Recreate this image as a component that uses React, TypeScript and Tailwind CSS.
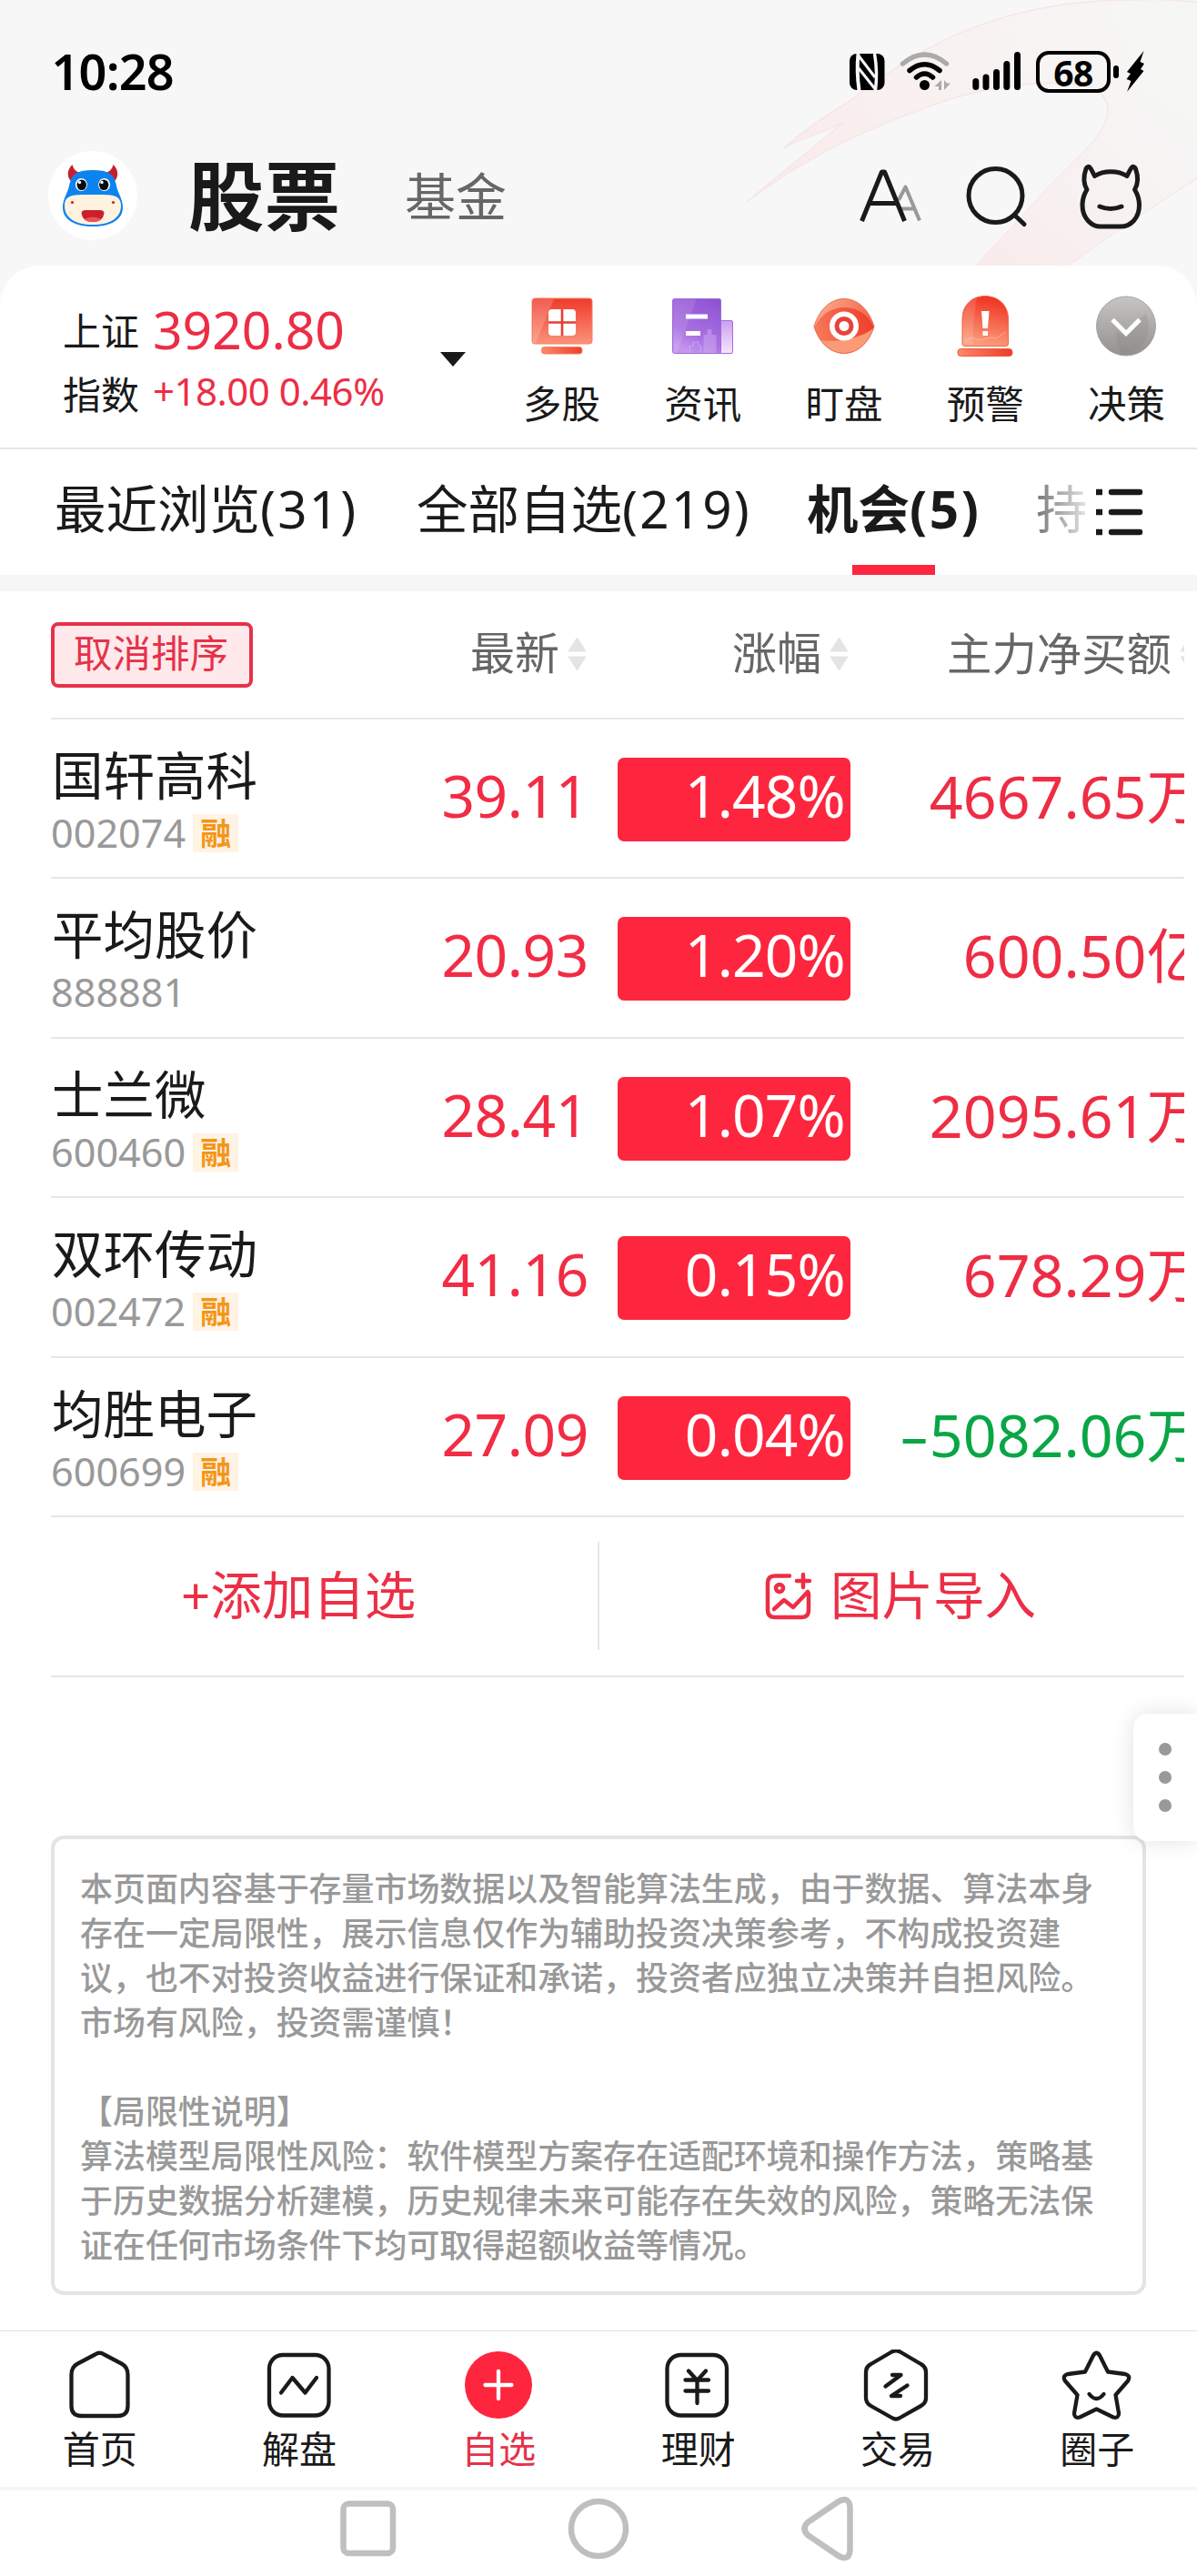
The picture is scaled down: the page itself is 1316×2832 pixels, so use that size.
import React from "react";

const FONT = "font-['Noto_Sans','Noto_Sans_CJK_SC',sans-serif]";

function Swoosh() {
  return (
    <svg className="absolute top-0 right-0" width="516" height="292" viewBox="800 0 516 292" fill="none">
      <defs>
        <linearGradient id="swoosh" x1="820" y1="223" x2="1250" y2="40" gradientUnits="userSpaceOnUse">
          <stop offset="0" stopColor="#fbe9ea" />
          <stop offset="0.5" stopColor="#f8f1f0" />
          <stop offset="1" stopColor="#f6f6f5" />
        </linearGradient>
        <linearGradient id="swooshTail" x1="1260" y1="60" x2="1120" y2="290" gradientUnits="userSpaceOnUse">
          <stop offset="0" stopColor="#f6f5f5" stopOpacity="0" />
          <stop offset="1" stopColor="#f9eced" />
        </linearGradient>
      </defs>
      <path
        d="M819.600 223 L926.600 135 C905 146 880 152 861.500 163 Q890 138 931 113 C975 84 1060 0 1245 0 Q1285 -2 1317 3 V195 Q1250 238 1174 292 H1073 C1105 258 1130 230 1161.500 197 C1185 172 1218 148 1218 120 C1216 98 1195 92 1174 92 C1130 90 1080 96 1027 115 C950 142 880 176 819.600 223Z"
        fill="url(#swoosh)"
        stroke="#f7e6e7"
        strokeWidth="1.500"
      />
      <path d="M1317 40 V195 Q1250 238 1174 292 H1073 C1105 258 1130 230 1161.500 197 C1185 172 1218 148 1218 120 L1240 60Z" fill="url(#swooshTail)" />
    </svg>
  );
}

function StatusIcons() {
  return (
    <>
      <svg width="40" height="42" viewBox="932 58 40 42" fill="none">
        <rect x="933" y="59" width="38.500" height="40" rx="8" fill="#000" />
        <path d="M942.500 59 Q940.500 79 943.500 99" stroke="#f7f7f7" strokeWidth="4" />
        <path d="M960.500 59 Q964 79 961.500 99" stroke="#f7f7f7" strokeWidth="3.500" />
        <path d="M942 60 L961 85 M943 75 L962 99" stroke="#f7f7f7" strokeWidth="3" />
      </svg>
      <svg className="ml-[16px]" width="58" height="46" viewBox="988 57 58 46" fill="none" strokeLinecap="round">
        <path d="M991.500 71 Q1015.500 51 1039.500 71" stroke="#aaa" strokeWidth="5.500" />
        <path d="M999 78.500 Q1015.500 65 1032 78.500" stroke="#000" strokeWidth="5.500" />
        <path d="M1006.500 86 Q1015.500 78 1024.500 86" stroke="#000" strokeWidth="5.500" />
        <circle cx="1015.500" cy="94.500" r="5.500" fill="#000" />
        <path d="M1034 89 V100 H1031 V96 H1026.500Z M1037 89 V100 L1044 92.500 H1040Z" fill="#aaa" />
      </svg>
      <svg className="ml-[22px]" width="54" height="46" viewBox="1068 57 54 46" strokeWidth="7" stroke="#000" strokeLinecap="round">
        <path d="M1071.800 90.500V96.500M1083 86V96.500M1094.500 80.500V96.500M1105.800 71.500V96.500M1117.500 61.500V96.500" />
      </svg>
      <div className="ml-[16px] flex h-[46px] w-[82px] items-center justify-center rounded-[14px] border-4 border-black text-[39px] leading-none font-bold tracking-[-0.5px]">68</div>
      <div className="ml-[3px] h-[14px] w-[6px] rounded-full bg-black" />
      <svg className="ml-[7px]" width="22" height="48" viewBox="1236 56 22 48">
        <path d="M1256.500 57 L1238 80 L1242 82 L1237.500 88 L1242.500 90 L1238 102 L1256.500 79 L1253 77 L1257 71 L1252.500 69Z" fill="#000" />
      </svg>
    </>
  );
}

function BullLogo() {
  return (
    <svg width="98" height="98" viewBox="0 0 98 98">
      <circle cx="49" cy="49" r="49" fill="#fff" />
      <path d="M26.500 15 C21 20 20 28 25 33 L35 24 Q28 22 26.500 15Z M71.500 15 C77 20 78 28 73 33 L63 24 Q70 22 71.500 15Z" fill="#c81f2d" />
      <path d="M37 22 Q49 20 61 22 Q72 24 74.500 36 C76 46 82 52 82 62 C82 76 68 83 49 83 C30 83 16 76 16 62 C16 52 22 46 23.500 36 Q26 24 37 22Z" fill="#0d83ee" />
      <path d="M49 48 C68 48 80 47 80 60 C80 74 68 81 49 81 C30 81 18 74 18 60 C18 47 30 48 49 48Z" fill="#fff3e0" />
      <ellipse cx="36.400" cy="37" rx="6.500" ry="7" fill="#fff" />
      <ellipse cx="61.600" cy="37" rx="6.500" ry="7" fill="#fff" />
      <ellipse cx="36.800" cy="37.300" rx="5.200" ry="5.800" fill="#0a0a0a" />
      <ellipse cx="61.200" cy="37.300" rx="5.200" ry="5.800" fill="#0a0a0a" />
      <circle cx="34.500" cy="34.500" r="1.700" fill="#fff" />
      <circle cx="59" cy="34.500" r="1.700" fill="#fff" />
      <circle cx="26.500" cy="56.500" r="1.600" fill="#c81f2d" />
      <circle cx="71.500" cy="56.500" r="1.600" fill="#c81f2d" />
      <path d="M41 65 H57 Q61.500 65 61.500 68.500 Q60 78 49 78 Q38 78 36.500 68.500 Q36.500 65 41 65Z" fill="#cb1f2b" />
      <path d="M39.500 75 Q49 70 58.500 75 Q55 78 49 78 Q43 78 39.500 75Z" fill="#e8525a" />
    </svg>
  );
}

function HeaderIcons() {
  return (
    <svg className="mr-[56px]" width="320" height="80" viewBox="940 175 320 80" fill="none" strokeLinecap="round" strokeLinejoin="round">
      <path d="M988 220 L995.500 205.500 L1011 242.500 M991 229.500 H1005" stroke="#999" strokeWidth="4" strokeLinecap="butt" />
      <path d="M947.500 243 L969.500 189 H972.500 L994.500 243 M956 223.500 H986" stroke="#1a1a1a" strokeWidth="5" strokeLinecap="butt" />
      <circle cx="1094.500" cy="215" r="29.500" stroke="#1a1a1a" strokeWidth="5" />
      <path d="M1116 237 L1126 246.500" stroke="#1a1a1a" strokeWidth="5" />
      <path
        d="M1203.500 193.500 C1201.500 190 1200.500 187 1198.500 184.500 C1197 182.500 1195 183 1194 185.500 C1191 194 1190.500 201 1195 208.500 C1191.500 214 1190 219 1190 225.500 C1190 240 1200 249 1210 249 H1232 C1243 249 1252.500 240 1252.500 225.500 C1252.500 219 1251 214 1247.500 208.500 C1252 201 1251.500 194 1248.500 185.500 C1247.500 183 1245.500 182.500 1244 184.500 C1242 187 1241 190 1239 193.500 C1229 187 1213.500 187 1203.500 193.500Z"
        stroke="#1a1a1a"
        strokeWidth="5"
      />
      <path d="M1209 227 Q1221 232 1233 227" stroke="#1a1a1a" strokeWidth="5" />
    </svg>
  );
}

function MonitorIcon() {
  return (
    <svg width="72" height="72" viewBox="582 324 72 72">
      <defs>
        <linearGradient id="mon" x1="0" y1="0" x2="0" y2="1">
          <stop offset="0" stopColor="#f0392a" />
          <stop offset="1" stopColor="#f9937a" />
        </linearGradient>
        <linearGradient id="monBase" x1="0" y1="0" x2="1" y2="0">
          <stop offset="0" stopColor="#fb8a6c" />
          <stop offset="1" stopColor="#ef3d2a" />
        </linearGradient>
      </defs>
      <rect x="585" y="328" width="66" height="50" rx="3" fill="url(#mon)" stroke="#f58263" />
      <path d="M586 329 H609 L589 377 H586Z" fill="#fff" opacity=".18" />
      <rect x="595.500" y="381.500" width="44.500" height="7.500" rx="3" fill="url(#monBase)" stroke="#f58263" />
      <rect x="603" y="340" width="30" height="29" rx="4" fill="#fff" />
      <path d="M618 340 V369 M603 354.500 H633" stroke="#e83b35" strokeWidth="2.600" />
    </svg>
  );
}

function NewsIcon() {
  return (
    <svg width="72" height="72" viewBox="737.500 324 72 72">
      <defs>
        <linearGradient id="news" x1="0.800" y1="0" x2="0.400" y2="1">
          <stop offset="0" stopColor="#8f53d2" />
          <stop offset="0.700" stopColor="#a971e2" />
          <stop offset="1" stopColor="#c496ee" />
        </linearGradient>
        <linearGradient id="newsSide" x1="0" y1="0" x2="0" y2="1">
          <stop offset="0" stopColor="#caa0f2" />
          <stop offset="1" stopColor="#f8e4fc" />
        </linearGradient>
      </defs>
      <rect x="790" y="352.500" width="16" height="36" rx="1.500" fill="url(#newsSide)" stroke="#a36be0" />
      <rect x="740" y="328.500" width="53" height="60" rx="2" fill="url(#news)" stroke="#a069dd" />
      <path d="M741 329 H766 L745 388 H741Z" fill="#fff" opacity=".1" />
      <path d="M774 388 V368 H778 V362 H783 V368 H788 V388Z" fill="#d5b2f5" opacity=".45" />
      <path d="M759 388 V380 H763 V376 H768 V380 H771 V388" fill="none" stroke="#d9b9f7" opacity=".6" />
      <path d="M754.500 345.500 H778.500 V350.500 H754.500Z M754.500 364 H770.500 V369 H754.500Z" fill="#fff" />
    </svg>
  );
}

function EyeIcon() {
  return (
    <svg width="72" height="72" viewBox="892 324 72 72">
      <defs>
        <linearGradient id="eyeTop" x1="0" y1="0" x2="1" y2="0.400">
          <stop offset="0" stopColor="#fcb094" />
          <stop offset="1" stopColor="#f2634a" />
        </linearGradient>
        <linearGradient id="eye" x1="0" y1="0.500" x2="1" y2="0.300">
          <stop offset="0" stopColor="#f8795b" />
          <stop offset="1" stopColor="#ee3d28" />
        </linearGradient>
      </defs>
      <path d="M895 359 C901 339 914 328.500 928 328.500 C942 328.500 955 339 961 359 C955 378 942 388.500 928 388.500 C914 388.500 901 378 895 359Z" fill="url(#eyeTop)" />
      <path d="M895.500 360 C903 344 916 338 928 338 C944 338 955 347 960.500 359 C955 378 942 388 928 388 C914 388 901 378 895.500 360Z" fill="url(#eye)" />
      <path d="M902 374 C922 377 946 372 960 361 C954 379 942 388 928 388 C917 388 908 383 902 374Z" fill="#fb9a77" />
      <path d="M895 359 C901 339 914 328.500 928 328.500 C942 328.500 955 339 961 359 C955 378 942 388.500 928 388.500 C914 388.500 901 378 895 359Z" fill="none" stroke="#e8704f" />
      <circle cx="928" cy="358.500" r="16" fill="#fff" />
      <circle cx="928" cy="358.500" r="10.500" fill="#e5443a" />
      <circle cx="928" cy="358.500" r="5.500" fill="#fff" />
    </svg>
  );
}

function AlarmIcon() {
  return (
    <svg width="72" height="72" viewBox="1047 324 72 72">
      <defs>
        <linearGradient id="alarm" x1="0.600" y1="0" x2="0.400" y2="1">
          <stop offset="0" stopColor="#f0301d" />
          <stop offset="1" stopColor="#fca181" />
        </linearGradient>
        <linearGradient id="alarmBase" x1="0" y1="0" x2="1" y2="0">
          <stop offset="0" stopColor="#fb8a6c" />
          <stop offset="1" stopColor="#ee3b26" />
        </linearGradient>
      </defs>
      <path d="M1058 378 V351 C1058 334 1070 325.500 1083 325.500 C1096 325.500 1108.500 334 1108.500 351 V378 Q1108.500 380.500 1106 380.500 H1060.500 Q1058 380.500 1058 378Z" fill="url(#alarm)" stroke="#f0694b" />
      <path d="M1061 374 L1068 371 L1076 374 L1090 371 L1095 372 L1106 365" fill="none" stroke="#ffc2a6" opacity=".7" />
      <path d="M1059 378 V351 C1059 338 1066 330 1074 327.500 Q1069 350 1070 380Z" fill="#fff" opacity=".12" />
      <rect x="1053" y="383.500" width="60" height="8" rx="3.500" fill="url(#alarmBase)" stroke="#ee5a3d" />
      <path d="M1079 342 H1087.500 L1086 361 H1080.500Z M1080.500 364 H1086 V369 H1080.500Z" fill="#fff" />
    </svg>
  );
}

function DecideIcon() {
  return (
    <svg width="72" height="72" viewBox="1202.500 324 72 72">
      <defs>
        <linearGradient id="dec" x1="0" y1="0" x2="0" y2="1">
          <stop offset="0" stopColor="#c6c5c3" />
          <stop offset="1" stopColor="#93918f" />
        </linearGradient>
      </defs>
      <circle cx="1238.500" cy="358.500" r="32.500" fill="url(#dec)" stroke="#a5a3a1" />
      <path d="M1228 364 L1238.500 370 L1260 344 A32 32 0 0 1 1234 390 Q1226 376 1228 364Z" fill="#85827f" opacity=".25" />
      <path d="M1223.500 351.500 L1238.500 366.500 L1253.500 351.500" fill="none" stroke="#fff" strokeWidth="5" />
    </svg>
  );
}

const shortcuts = [
  { label: "多股", Icon: MonitorIcon },
  { label: "资讯", Icon: NewsIcon },
  { label: "盯盘", Icon: EyeIcon },
  { label: "预警", Icon: AlarmIcon },
  { label: "决策", Icon: DecideIcon },
];

function SortArrows() {
  return (
    <svg className="ml-[8px] shrink-0" width="23" height="48" viewBox="0 -5 23 48" fill="#e4e4e4" stroke="#e4e4e4" strokeLinejoin="round">
      <path d="M2 18 L11.500 3 L21 18Z M2 24 L11.500 39 L21 24Z" />
    </svg>
  );
}

const stocks = [
  { name: "国轩高科", code: "002074", tag: true, price: "39.11", pct: "1.48%", flow: "4667.65万", up: true },
  { name: "平均股价", code: "888881", tag: false, price: "20.93", pct: "1.20%", flow: "600.50亿", up: true },
  { name: "士兰微", code: "600460", tag: true, price: "28.41", pct: "1.07%", flow: "2095.61万", up: true },
  { name: "双环传动", code: "002472", tag: true, price: "41.16", pct: "0.15%", flow: "678.29万", up: true },
  { name: "均胜电子", code: "600699", tag: true, price: "27.09", pct: "0.04%", flow: "5082.06万", up: false },
];

const notice = [
  "本页面内容基于存量市场数据以及智能算法生成，由于数据、算法本身",
  "存在一定局限性，展示信息仅作为辅助投资决策参考，不构成投资建",
  "议，也不对投资收益进行保证和承诺，投资者应独立决策并自担风险。",
  "市场有风险，投资需谨慎！",
  "",
  "【局限性说明】",
  "算法模型局限性风险：软件模型方案存在适配环境和操作方法，策略基",
  "于历史数据分析建模，历史规律未来可能存在失效的风险，策略无法保",
  "证在任何市场条件下均可取得超额收益等情况。",
];

const navIcons: Record<string, React.ReactNode> = {
  首页: (
    <path d="M34 4.500 Q39 1 44 4.500 L63 14.500 Q70 18 70 27 V61 Q70 72 59 72 H19 Q8 72 8 61 V27 Q8 18 15 14.500Z" transform="translate(1 1)" />
  ),
  解盘: (
    <>
      <rect x="7.500" y="6" width="65.500" height="66.500" rx="15" />
      <path d="M20.500 47.500 L33 31 L47 47.500 L59.500 31" />
    </>
  ),
  自选: (
    <>
      <circle cx="40.500" cy="39" r="37" fill="#fd263e" stroke="none" />
      <path d="M26 39 H55 M40.500 24 V54" stroke="#fff" />
    </>
  ),
  理财: (
    <g transform="translate(-1.500 0)">
      <rect x="7.500" y="6" width="65.500" height="66.500" rx="15" />
      <path d="M31 23.500 L40.500 34 L50 23.500 M27.500 33.500 H53 M27.500 45.500 H53 M40.500 34 V59" />
    </g>
  ),
  交易: (
    <g transform="translate(-1.500 0)">
      <path d="M35.500 2.500 Q40 0 44.500 2.500 L67.500 16 Q73 19 73 25 V53 Q73 59 67.500 62 L44.500 75 Q40 78 35.500 75 L12.500 62 Q7 59 7 53 V25 Q7 19 12.500 16Z" />
      <path d="M36 28 H45.500 L28.500 40.500 M52.500 39.500 L35 51 H45" />
    </g>
  ),
  圈子: (
    <>
      <path d="M36.500 6.500 Q40 1 43.500 6.500 L52.500 24.500 L71.500 27 Q78 29 74.500 34.500 L61 50 L64.500 70 Q64.500 76 58.500 74.500 L40 65.500 L21.500 74.500 Q15.500 76 15.500 70 L19 50 L5.500 34.500 Q2 29 8.500 27 L27.500 24.500Z" />
      <path d="M32 49 Q40 59 48 49" />
    </>
  ),
};

export default function App() {
  return (
    <div className={`relative flex h-[2832px] w-[1316px] flex-col overflow-hidden bg-[#f7f7f7] text-[#1a1a1a] ${FONT}`}>
      <Swoosh />

      <div className="relative flex h-[156px] items-center pt-[2px] pr-[57px] pl-[56.500px] text-black">
        <span className="pb-[3px] text-[54px] leading-none font-semibold tracking-[-0.8px]">10:28</span>
        <div className="ml-auto flex items-center">
          <StatusIcons />
        </div>
      </div>

      <header className="relative flex h-[136px] items-center pb-[18px] pl-[53px]">
        <BullLogo />
        <span className="ml-[56px] text-[83.500px] leading-none font-bold">股票</span>
        <span className="ml-[71px] text-[56px] leading-none text-[#666]">基金</span>
        <div className="ml-auto">
          <HeaderIcons />
        </div>
      </header>

      <section className="relative flex h-[202px] shrink-0 rounded-t-[44px] border-b-2 border-[#e6e6e6] bg-white">
        <div className="flex w-[540px] items-start pl-[69px]">
          <div className="pt-[37px] text-[42px] leading-[70px]">
            <div>上证</div>
            <div>指数</div>
          </div>
          <div className="ml-[15px] whitespace-nowrap text-[#ed2d45]">
            <div className="pt-[33px] text-[57px] leading-[74px]">3920.80</div>
            <div className="text-[42px] leading-[62px] tracking-[-0.500px]">+18.00 0.46%</div>
          </div>
          <div className="mt-[95px] ml-auto h-0 w-0 border-x-[14px] border-t-[16px] border-x-transparent border-t-[#1a1a1a]" />
          <div className="w-[28px] shrink-0" />
        </div>
        <div className="grid flex-1 grid-cols-5">
          {shortcuts.map(({ label, Icon }) => (
            <div key={label} className="flex flex-col items-center pt-[32px]">
              <Icon />
              <span className="mt-[18px] text-[42.500px] leading-[60px]">{label}</span>
            </div>
          ))}
        </div>
      </section>

      <nav className="relative flex h-[138px] shrink-0 items-center bg-white pl-[60px] text-[56.500px] leading-none whitespace-nowrap">
        <span className="w-[398px] pb-[6px]">
          最近浏览<span className="tracking-[2.200px]">(31)</span>
        </span>
        <span className="w-[429px] pb-[6px]">
          全部自选<span className="tracking-[2.200px]">(219)</span>
        </span>
        <div className="relative flex h-full w-[252px] items-center pb-[6px] font-bold">
          机会<span className="tracking-[2.600px]">(5)</span>
          <div className="absolute bottom-0 left-[50px] h-[11px] w-[91px] bg-[#fd263e]" />
        </div>
        <span className="bg-linear-to-r from-[#777] to-[#e8e8e8] bg-clip-text pb-[6px] text-transparent">持</span>
        <svg className="ml-[8px]" width="54" height="54" viewBox="1205 535 54 54" stroke="#1a1a1a" strokeWidth="6.500">
          <path d="M1206 540H1213M1206 562H1213M1206 584H1213" />
          <path d="M1223 540H1254M1223 562H1254M1223 584H1254" strokeLinecap="round" />
        </svg>
      </nav>

      <div className="h-[18px] shrink-0 bg-[#f6f6f6]" />

      <main className="relative flex flex-1 flex-col bg-white">
        <div className="mr-[14px] ml-[56px] overflow-hidden">
          <div className="flex h-[140.500px] items-center border-b-2 border-[#e8e8e8] text-[49px] leading-none whitespace-nowrap text-[#666]">
            <button className="mt-[2px] flex h-[72px] w-[222px] shrink-0 items-center justify-center rounded-[8px] border-4 border-[#e5324a] bg-[#ffe9eb] pr-[2px] pb-[5px] text-[42.500px] leading-none text-[#e5324a]">取消排序</button>
            <div className="flex w-[368px] shrink-0 items-center justify-end pb-[4px]">
              最新<SortArrows />
            </div>
            <div className="flex w-[288px] shrink-0 items-center justify-end pb-[4px]">
              涨幅<SortArrows />
            </div>
            <div className="ml-[107px] flex shrink-0 items-center pb-[4px] text-[49.400px]">
              主力净买额<SortArrows />
            </div>
          </div>

          {stocks.map((s) => (
            <div key={s.code} className="flex h-[175.500px] border-b-2 border-[#e6e6e6]">
              <div className="w-[300px] pt-[28px]">
                <div className="pl-[1px] text-[56.500px] leading-[68px]">{s.name}</div>
                <div className="flex h-[44px] items-center pt-[14px]">
                  <span className="text-[43.200px] leading-none text-[#999]">{s.code}</span>
                  {s.tag && <span className="ml-[8px] flex h-[42px] w-[50px] items-center justify-center bg-[#fff3e4] text-[34px] leading-none font-bold text-[#f3961a]">融</span>}
                </div>
              </div>
              <div className="w-[291px] pt-[51px] text-right text-[64px] leading-[66px] tracking-[-0.400px] text-[#f22c45]">{s.price}</div>
              <div className="mt-[42px] ml-[32px] h-[92px] w-[256px] rounded-[7px] bg-[#fd263e] pt-[9px] pr-[6px] text-right text-[64px] leading-[66px] tracking-[-0.800px] text-white">{s.pct}</div>
              <div className="flex flex-1 justify-end pt-[51px] text-[64.500px] leading-[66px] whitespace-nowrap">
                <span className={s.up ? "-mr-[23px] text-[#ee2d45]" : "-mr-[23px] text-[#0aa646]"}>
                  {!s.up && <span className="inline-block origin-right scale-x-160">-</span>}
                  {s.flow}
                </span>
              </div>
            </div>
          ))}

          <div className="flex h-[175.500px] items-center border-b-2 border-[#e6e6e6] text-[56.500px] leading-none text-[#ec2f46]">
            <div className="w-[601px] pb-[2px] pl-[143px]">+添加自选</div>
            <div className="h-[119px] w-[2px] bg-[#e6e6e6]" />
            <div className="flex items-center pl-[181px]">
              <svg width="54" height="54" viewBox="0 0 54 54" fill="none" stroke="#ec2f46" strokeWidth="4.500" strokeLinecap="round" strokeLinejoin="round">
                <path d="M28 4.500 H12 Q4 4.500 4 12.500 V42 Q4 50 12 50 H41 Q49 50 49 42 V24" />
                <path d="M43 3 V17 M36 10 H50" />
                <circle cx="17" cy="18" r="4" />
                <path d="M11 41 L22 31 L32 39 L48 22" />
              </svg>
              <span className="ml-[19px] pb-[2px]">图片导入</span>
            </div>
          </div>
        </div>

        <div className="mt-[174px] ml-[56px] h-[505px] w-[1204px] rounded-[14px] border-4 border-[#e4e4e4] pt-[30px] pl-[28px] text-[35.950px] leading-[49px] font-medium whitespace-nowrap text-[#999]">
          {notice.map((line, i) => (
            <div key={i} className="h-[49.100px]">
              {line}
            </div>
          ))}
        </div>

        <div className="absolute top-[1234px] right-0 flex h-[140px] w-[70px] flex-col items-center justify-center gap-[17px] rounded-l-[16px] bg-white shadow-[0_0_24px_rgba(0,0,0,0.12)]">
          <div className="size-[14px] rounded-full bg-[#999]" />
          <div className="size-[14px] rounded-full bg-[#999]" />
          <div className="size-[14px] rounded-full bg-[#999]" />
        </div>
      </main>

      <footer className="relative h-[270px] shrink-0 border-t border-[#e0e0e0] bg-white">
        <div className="grid h-[175px] grid-cols-6 border-b-4 border-[#f6f6f6]">
          {Object.keys(navIcons).map((label) => (
            <div key={label} className={label === "自选" ? "flex flex-col items-center pt-[20px] text-[#e5324a]" : "flex flex-col items-center pt-[20px]"}>
              <svg width="80" height="80" viewBox="0.500 0 80 80" fill="none" stroke="#1a1a1a" strokeWidth="4.300" strokeLinecap="round" strokeLinejoin="round">
                {navIcons[label]}
              </svg>
              <span className="mt-[3px] text-[41px] leading-[52px]">{label}</span>
            </div>
          ))}
        </div>
        <svg className="mx-auto block" width="580" height="84" viewBox="368 2738 580 84" fill="none" stroke="#bfbfbf" strokeWidth="6.500" strokeLinejoin="round">
          <rect x="377.500" y="2752.500" width="54.500" height="54.500" rx="6" />
          <circle cx="658" cy="2780" r="30" />
          <path d="M888 2773 L922 2750 Q934 2744 934.500 2757 V2803 Q934 2816 922 2810 L888 2787 Q881 2780 888 2773Z" />
        </svg>
      </footer>
    </div>
  );
}
